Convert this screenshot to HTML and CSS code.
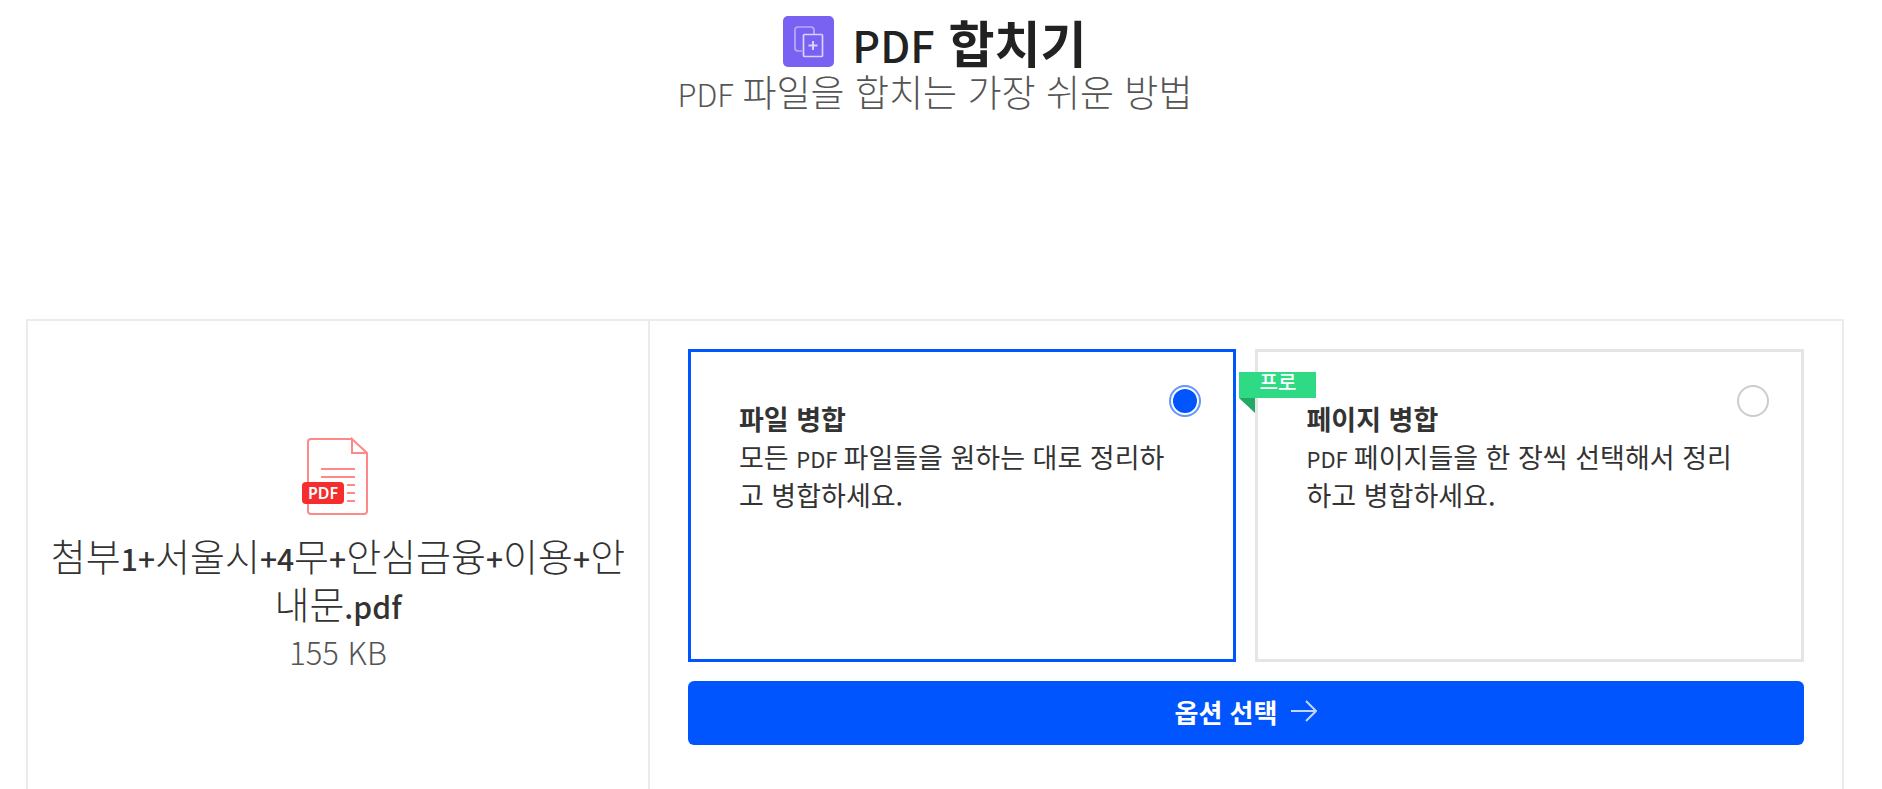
FILE: index.html
```
<!DOCTYPE html>
<html lang="ko">

<head>
    <title>PDF 합치기</title>
    <meta charset="utf-8" />
    <meta name="viewport" content="width=device-width, initial-scale=1" />
    <link rel="stylesheet" href="styles.css">
</head>

<body>
    <header class="header">
        <div class="title-row">
            <svg class="tool-icon" viewBox="0 0 51 51" aria-hidden="true">
                <rect width="51" height="51" rx="5" fill="#7961f2" />
                <g fill="none" stroke="#d9d2fb" stroke-width="1.7">
                    <path d="M19 35h-4q-3 0-3-3v-18q0-3 3-3h13q3 0 3 3v4" stroke="#b9acf8" />
                    <rect x="20.500" y="18.500" width="19" height="22" rx="1" />
                    <path d="M30 25v9M25.500 29.500h9" stroke-width="2" />
                </g>
            </svg>
            <h1><span class="latin">PDF</span> 합치기</h1>
        </div>
        <h2><span class="latin">PDF </span>파일을 합치는 가장 쉬운 방법</h2>
    </header>

    <main class="panel">
        <section class="file">
            <svg class="pdf-icon" viewBox="0 0 72 80" aria-hidden="true">
                <g fill="none" stroke="#f88" stroke-width="2">
                    <path d="M50 2H9Q6 2 6 5V74Q6 77 9 77H62Q65 77 65 74V16L50 2V16H65" />
                    <path d="M19 32H53M19 40H53M45 48H53M45 56H53M45 64H53" />
                </g>
                <rect y="45" width="42" height="22" rx="4" fill="#f52d2d" />
                <text class="pdf-label" x="21" y="62" text-anchor="middle">PDF</text>
            </svg>
            <p class="file-name">첨부<span class="latin">1+</span>서울시<span class="latin">+4</span>무<span class="latin">+</span>안심금융<span class="latin">+</span>이용<span class="latin">+</span>안<br>내문<span class="latin">.pdf</span></p>
            <p class="file-size">155 KB</p>
        </section>

        <form class="options">
            <div class="cards">
                <label class="card">
                    <input type="radio" name="mode" value="files" checked>
                    <strong>파일 병합</strong>
                    <span class="card-text">모든 <span class="latin">PDF </span>파일들을 원하는 대로 정리하고 병합하세요.</span>
                </label>
                <label class="card">
                    <em class="badge">프로</em>
                    <input type="radio" name="mode" value="pages">
                    <strong>페이지 병합</strong>
                    <span class="card-text"><span class="latin">PDF </span>페이지들을 한 장씩 선택해서 정리하고 병합하세요.</span>
                </label>
            </div>
            <button class="submit" type="button">
                옵션 선택
                <svg class="arrow" viewBox="0 0 26 22" aria-hidden="true">
                    <path d="M0 11H25M15 1L25 11L15 21" fill="none" stroke="#c2d6ff" stroke-width="2" />
                </svg>
            </button>
        </form>
    </main>
</body>

</html>
```
FILE: styles.css
```
* {
    box-sizing: border-box;
}

body {
    display: flex;
    flex-direction: column;
    min-height: 100vh;
    margin: 0;
    padding: 0 38px 0 26px;
    font-family: "Noto Sans CJK KR", "Noto Sans CJK JP", sans-serif;
    color: #333;
    background: #fff;
}

h1,
h2,
p {
    margin: 0;
}

/* latin runs are set smaller than the hangul around them */
.latin {
    line-height: 1;
}

.header {
    padding-top: 12px;
    text-align: center;
}

.title-row {
    display: flex;
    justify-content: center;
    align-items: center;
    gap: 18px;
}

.tool-icon {
    width: 51px;
    height: 51px;
}

h1 {
    font-size: 50px;
    line-height: 58px;
    font-weight: 700;
    color: #222;
}

h1 .latin {
    font-size: 43px;
    font-weight: 500;
}

h2 {
    font-size: 37px;
    line-height: 42px;
    font-weight: 300;
    color: #555;
}

h2 .latin {
    font-size: 31px;
}

.panel {
    display: grid;
    grid-template-columns: 623fr 1194fr;
    flex: 1;
    margin-top: 207px;
    border: 2px solid #ebebeb;
    border-bottom: 0;
}

.file {
    padding: 116px 20px 24px;
    border-right: 2px solid #ebebeb;
    text-align: center;
}

.pdf-icon {
    display: block;
    width: 72px;
    height: 80px;
    margin: 0 auto 14px;
}

.pdf-label {
    font: 600 16px "Noto Sans", sans-serif;
    fill: #fff;
}

.file-name {
    font-size: 38px;
    line-height: 48px;
    font-weight: 300;
}

.file-name .latin {
    font-size: 30px;
    font-weight: 500;
}

.file-size {
    font-size: 31px;
    line-height: 50px;
    font-weight: 300;
    color: #555;
}

.options {
    padding: 28px 38px;
}

.cards {
    display: grid;
    grid-template-columns: 1fr 1fr;
    gap: 19px;
    margin-bottom: 19px;
}

.card {
    position: relative;
    min-height: 313px;
    padding: 48px 64px 48px 48px;
    border: 3px solid #e5e5e5;
    font-size: 27px;
    line-height: 38px;
    cursor: pointer;
}

.card:has(input:checked) {
    border-color: #05f;
}

.card strong,
.card-text {
    display: block;
}

.card-text {
    word-break: break-all;
}

.card-text .latin {
    font-size: 22px;
}

.card input {
    position: absolute;
    top: 33px;
    right: 32px;
    width: 32px;
    height: 32px;
    margin: 0;
    border: 2px solid #ccc;
    border-radius: 50%;
    background: #fff;
    appearance: none;
}

.card input:checked {
    border-color: #6394ff;
    background: #05f content-box;
    padding: 2px;
}

.badge {
    position: absolute;
    top: 20px;
    left: -19px;
    width: 77px;
    height: 26px;
    font-size: 20px;
    line-height: 20px;
    font-style: normal;
    font-weight: 500;
    text-align: center;
    color: #fff;
    background: #2edb84;
}

/* folded corner under the ribbon */
.badge::after {
    content: "";
    position: absolute;
    top: 100%;
    left: 0;
    border-top: 15px solid #24a866;
    border-left: 16px solid transparent;
}

.submit {
    display: flex;
    justify-content: center;
    align-items: center;
    gap: 14px;
    width: 100%;
    height: 64px;
    padding: 0 0 4px;
    border: 0;
    border-radius: 6px;
    font: inherit;
    font-size: 26px;
    font-weight: 700;
    color: #fff;
    background: #05f;
    cursor: pointer;
}

.arrow {
    width: 26px;
    height: 22px;
}
```
